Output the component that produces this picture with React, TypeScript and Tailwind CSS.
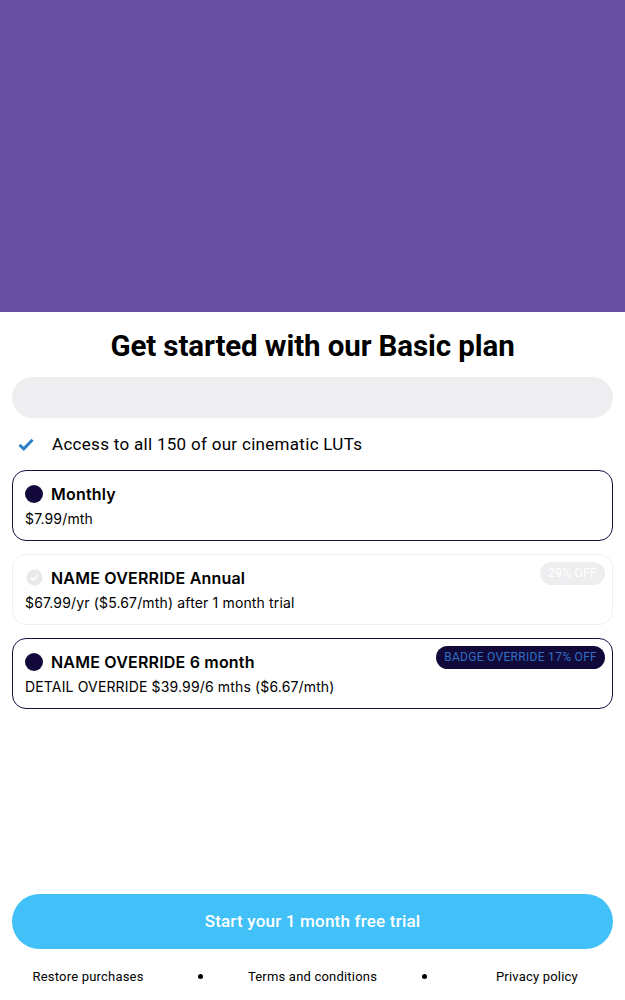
import React from 'react';

const plans = [
  { id: 'monthly', name: 'Monthly', detail: '$7.99/mth', selected: true, badge: null as string | null },
  { id: 'annual', name: 'NAME OVERRIDE Annual', detail: '$67.99/yr ($5.67/mth) after 1 month trial', selected: false, badge: '29% OFF' },
  { id: 'six', name: 'NAME OVERRIDE 6 month', detail: 'DETAIL OVERRIDE $39.99/6 mths ($6.67/mth)', selected: true, badge: 'BADGE OVERRIDE 17% OFF' },
];

const CheckMark = () => (
  <svg width="16" height="13" viewBox="0 0 16 13" className="shrink-0">
    <path d="M1.5 6.8 L5.8 10.8 L14.5 1.8" fill="none" stroke="#2f80c9" strokeWidth="3" strokeLinejoin="miter" />
  </svg>
);

const DisabledCheck = () => (
  <svg width="17" height="17" viewBox="0 0 18 18" className="shrink-0">
    <circle cx="9" cy="9" r="8.5" fill="#e9e9eb" />
    <path d="M5.2 9.2 L7.8 11.6 L12.8 6.5" fill="none" stroke="#ffffff" strokeWidth="1.8" />
  </svg>
);

export default function App() {
  return (
    <div className="w-[625px] h-[1000px] bg-white flex flex-col font-['Roboto',sans-serif] text-black">
      <div className="h-[312px] bg-[#6851a4] shrink-0" />

      <div className="flex flex-col px-3 flex-1">
        <h1 className="text-center text-[29.5px] font-bold leading-none mt-[20px] tracking-[-0.1px]">
          Get started with our Basic plan
        </h1>

        <div className="h-[41px] rounded-full bg-[#eeeef0] mt-[15px]" />

        <div className="flex items-center mt-[16px] h-[22px] pl-[6px]">
          <CheckMark />
          <span className="ml-[18px] text-[17px] tracking-[0.3px]">Access to all 150 of our cinematic LUTs</span>
        </div>

        <div className="flex flex-col gap-[13px] mt-[14px] font-['Inter',sans-serif]">
          {plans.map(p => (
            <div
              key={p.id}
              className={`relative rounded-[14px] h-[71px] px-3 pt-[11px] ${
                p.selected ? 'border-[1.5px] border-[#1a1040]' : 'border-[1.5px] border-[#efeff1]'
              }`}
            >
              <div className="flex items-center gap-[8px] h-[24px]">
                {p.selected ? (
                  <span className="w-[18px] h-[18px] rounded-full bg-[#130a3b] shrink-0" />
                ) : (
                  <span className="w-[18px] flex justify-center"><DisabledCheck /></span>
                )}
                <span className="text-[16px] font-semibold tracking-[0.2px]">{p.name}</span>
              </div>
              <div className="text-[14px] mt-[2px] tracking-[0.15px]">{p.detail}</div>
              {p.badge && (
                <span
                  className={`absolute right-[7px] top-[7px] h-[23px] px-[8px] rounded-full flex items-center text-[12px] tracking-[0.3px] font-['Roboto',sans-serif] ${
                    p.selected ? 'bg-[#12093b] text-[#2f6fc1]' : 'bg-[#eeeef0] text-white'
                  }`}
                >
                  {p.badge}
                </span>
              )}
            </div>
          ))}
        </div>

        <div className="flex-1" />

        <button className="h-[55px] rounded-full bg-[#42c1f8] text-white text-[17px] font-medium tracking-[0.2px] pt-[2px]">
          Start your 1 month free trial
        </button>

        <div className="grid grid-cols-5 px-5 mt-[18px] mb-[14px] text-[13px] tracking-[0.2px] items-center">
          <span className="flex justify-center whitespace-nowrap">Restore purchases</span>
          <span className="flex justify-center"><span className="w-[5px] h-[5px] rounded-full bg-black" /></span>
          <span className="flex justify-center whitespace-nowrap">Terms and conditions</span>
          <span className="flex justify-center"><span className="w-[5px] h-[5px] rounded-full bg-black" /></span>
          <span className="flex justify-center whitespace-nowrap">Privacy policy</span>
        </div>
      </div>
    </div>
  );
}
